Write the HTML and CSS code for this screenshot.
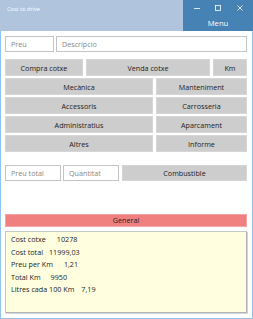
FILE: index.html
```html
<!DOCTYPE html>
<html lang="ca">
<head>
<meta charset="UTF-8" />
<meta name="viewport" content="width=device-width, initial-scale=1" />
<title>Cost to drive</title>
<link rel="stylesheet" href="styles.css">
</head>
<body>
<div class="window">
  <div class="titlebar">
    <div class="title">Cost to drive</div>
    <div class="menu-area">
      <div class="controls">
        <span class="ctl">
          <svg width="8" height="8" viewBox="0 0 8 8"><path d="M1 4.5h6" stroke="#fff" stroke-width="0.8"/></svg>
        </span>
        <span class="ctl">
          <svg width="8" height="8" viewBox="0 0 8 8"><rect x="1.5" y="1.5" width="5" height="5" fill="none" stroke="#fff" stroke-width="0.8"/></svg>
        </span>
        <span class="ctl">
          <svg width="8" height="8" viewBox="0 0 8 8"><path d="M1.5 1.5l5 5M6.5 1.5l-5 5" stroke="#fff" stroke-width="0.8"/></svg>
        </span>
      </div>
      <div class="menu">Menu</div>
    </div>
  </div>

  <div class="content">
    <div class="row-inputs">
      <input class="field f-preu" type="text" placeholder="Preu">
      <input class="field f-desc" type="text" placeholder="Descripcio">
    </div>

    <div class="btn-grid">
      <div class="btn-row row-top">
        <button class="btn">Compra cotxe</button>
        <button class="btn">Venda cotxe</button>
        <button class="btn">Km</button>
      </div>
      <div class="btn-row row-two">
        <button class="btn">Mecànica</button>
        <button class="btn">Manteniment</button>
      </div>
      <div class="btn-row row-two">
        <button class="btn">Accessoris</button>
        <button class="btn">Carrosseria</button>
      </div>
      <div class="btn-row row-two">
        <button class="btn">Administratius</button>
        <button class="btn">Aparcament</button>
      </div>
      <div class="btn-row row-two">
        <button class="btn">Altres</button>
        <button class="btn">Informe</button>
      </div>
    </div>

    <div class="row-fuel">
      <input class="field f-total" type="text" placeholder="Preu total">
      <input class="field f-qty" type="text" placeholder="Quantitat">
      <button class="btn btn-fuel">Combustible</button>
    </div>

    <div class="general">General</div>

    <div class="summary">
      <div class="line">Cost cotxe<span class="val v1">10278</span></div>
      <div class="line">Cost total<span class="val v2">11999,03</span></div>
      <div class="line">Preu per Km<span class="val v3">1,21</span></div>
      <div class="line">Total Km<span class="val v4">9950</span></div>
      <div class="line">Litres cada 100 Km<span class="val v5">7,19</span></div>
    </div>
  </div>
</div>
</body>
</html>
```

FILE: styles.css
```css
* { box-sizing: border-box; }
body { margin: 0; font-family: "Open Sans", "Noto Sans", sans-serif; font-size: 7.2px; color: #222; background: #fff; }

.window { width: 253px; height: 319px; display: flex; flex-direction: column; }

.titlebar { height: 31px; display: flex; }
.title { flex: 1; background: #b0c4de; color: #fff; font-size: 5.6px; padding: 5px 0 0 7px; }
.menu-area { width: 70px; background: #4682b4; color: #fff; display: flex; flex-direction: column; }
.controls { display: flex; justify-content: space-around; padding: 2px 2px 0 3px; height: 14px; align-items: center; }
.ctl { display: flex; }
.menu { text-align: center; font-size: 7.6px; padding-top: 4px; }

.content { flex: 1; border: 1px solid #8fc3ef; border-top: none; padding: 5px 5px 5px 4px; display: flex; flex-direction: column; }

.field { font: inherit; height: 16px; border: 1px solid #c4c4c4; padding: 0 0 0 5px; color: #222; background: #fff; outline: none; }
.field::placeholder { color: #888; }

.row-inputs { display: flex; gap: 2px; }
.f-preu { width: 49px; }
.f-desc { flex: 1; min-width: 0; }

.btn-grid { margin-top: 7px; display: flex; flex-direction: column; gap: 2px; }
.btn-row { display: flex; gap: 3px; height: 17px; }
.btn { font: inherit; color: #222; background: #cdcdcd; border: 1px solid #d6d6d6; padding: 0; }
.row-top .btn:nth-child(1) { width: 78px; }
.row-top .btn:nth-child(2) { flex: 1; }
.row-top .btn:nth-child(3) { width: 34px; }
.row-two .btn:nth-child(1) { width: 148px; }
.row-two .btn:nth-child(2) { flex: 1; }

.row-fuel { margin-top: 13px; display: flex; gap: 2px; height: 16px; }
.f-total { width: 56px; }
.f-qty { width: 56px; }
.btn-fuel { flex: 1; margin-left: 1px; }

.general { margin-top: 33px; height: 13px; background: #f08080; border: 1px solid #f4a4a4; text-align: center; line-height: 11px; color: #222; }

.summary { margin-top: 4px; height: 82px; background: #ffffe0; border: 1px solid #c8c8c8; border-right-color: #b4b4b4; border-bottom-color: #b4b4b4; box-shadow: 1px 1px 0 #d4d4d4; padding: 1px 0 0 5px; }
.line { height: 12.6px; line-height: 12.6px; white-space: nowrap; }
.val { margin-left: 11px; }
.v2 { margin-left: 6px; }
.v3 { margin-left: 11px; }
.v4 { margin-left: 10px; }
.v5 { margin-left: 7px; }
```
